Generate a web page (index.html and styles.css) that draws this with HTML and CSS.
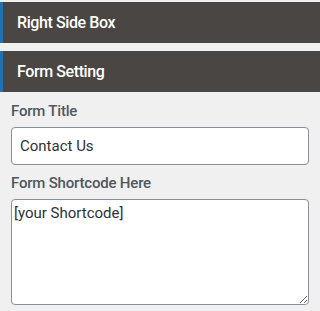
FILE: index.html
```html
<!DOCTYPE html>
<html>
<head>
<meta charset="utf-8">
<link rel="stylesheet" href="styles.css">
</head>
<body>
<div class="panel">
  <div class="box-head">Right Side Box</div>
  <div class="box-head">Form Setting</div>
  <div class="fields">
    <label class="lbl" for="ft">Form Title</label>
    <input id="ft" class="inp" type="text" value="Contact Us">
    <label class="lbl" for="fs">Form Shortcode Here</label>
    <textarea id="fs" class="area">[your Shortcode]</textarea>
  </div>
</div>
</body>
</html>
```
FILE: styles.css
```css
html, body {
  margin: 0;
  padding: 0;
  background: #f0f0f1;
  font-family: Roboto, "Noto Sans", sans-serif;
}
.panel {
  padding-top: 2px;
  display: flex;
  flex-direction: column;
  gap: 8px;
}
.box-head {
  height: 41px;
  box-sizing: border-box;
  background: #4a4644;
  border-left: 3px solid #2271b1;
  color: #ffffff;
  font-size: 16px;
  font-weight: 500;
  display: flex;
  align-items: center;
  padding-left: 14px;
  letter-spacing: -0.4px;
}
.fields {
  padding: 0 11px;
  display: flex;
  flex-direction: column;
}
.lbl {
  color: #50575e;
  font-size: 15px;
  font-weight: 500;
  line-height: 20px;
  margin-top: 1px;
  margin-bottom: 6px;
  letter-spacing: -0.2px;
}
.inp {
  height: 38px;
  box-sizing: border-box;
  border: 1px solid #8c8f94;
  border-radius: 4px;
  background: #fff;
  padding: 0 8px;
  font-family: Roboto, "Noto Sans", sans-serif;
  font-size: 15px;
  color: #2c3338;
  margin-bottom: 8px;
}
.inp + .lbl {
  margin-top: 0;
  margin-bottom: 6px;
}
.area {
  height: 106px;
  box-sizing: border-box;
  border: 1px solid #8c8f94;
  border-radius: 4px;
  background: #fff;
  padding: 3px 2px;
  font-family: Roboto, "Noto Sans", sans-serif;
  font-size: 15px;
  line-height: 20px;
  color: #2c3338;
  resize: both;
}
```
